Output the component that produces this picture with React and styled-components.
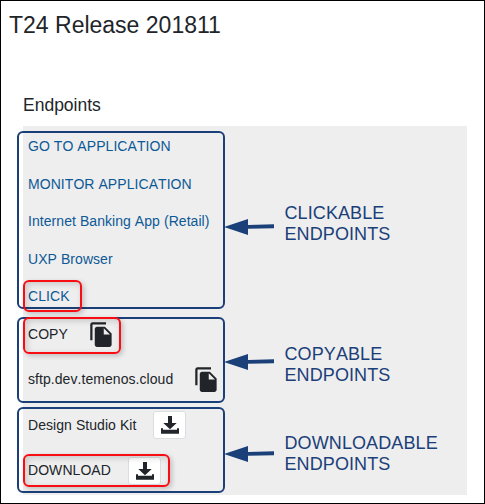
import React from "react";
import styled, { createGlobalStyle } from "styled-components";

const navy = "#1b4079";

const GlobalStyle = createGlobalStyle`
  *, *::after { box-sizing: border-box; }
  body {
    margin: 0;
    background: #fff;
    font-family: "Liberation Sans", Arial, sans-serif;
    font-kerning: none;
    color: #212529;
  }
`;

const Page = styled.main`
  width: 485px;
  height: 504px;
  border: 1px solid #000;
  overflow: hidden;
`;

const Title = styled.h1`
  margin: 10px 0 0 8px;
  font-size: 23px;
  line-height: 28px;
  font-weight: 400;
  font-kerning: normal;
`;

const Subtitle = styled.h2`
  margin: 56px 0 0 22px;
  font-size: 17.5px;
  line-height: 20px;
  font-weight: 400;
`;

const Panel = styled.section`
  display: flex;
  flex-direction: column;
  width: 444px;
  height: 369px;
  margin: 11px 0 0 22px;
  padding-top: 5px;
  background: #eee;
`;

const Section = styled.div`
  display: flex;
  height: ${(p) => p.$height}px;
  margin: 0 0 ${(p) => p.$gap || 0}px -6px;
`;

const Group = styled.div`
  width: 208px;
  padding-left: 9px;
  border: 2px solid ${navy};
  border-radius: 6px;
`;

const Row = styled.div`
  display: flex;
  align-items: center;
  height: ${(p) => p.$height}px;
  font-size: 14px;
  letter-spacing: 0.06px;
  line-height: 18px;
  white-space: nowrap;
`;

const Marked = styled.div`
  position: relative;
  display: flex;
  align-items: center;
  height: 100%;

  &::after {
    content: "";
    position: absolute;
    top: ${(p) => p.$top}px;
    left: -5px;
    width: ${(p) => p.$width}px;
    height: ${(p) => p.$height}px;
    border: 2px solid #f90d12;
    border-radius: 6px;
    box-shadow: 2px 2px 5px rgba(0, 0, 0, 0.2), inset 2px 2px 6px rgba(0, 0, 0, 0.16);
    pointer-events: none;
  }
`;

const Link = styled.a`
  color: #0d5996;
  text-decoration: none;
`;

const Callout = styled.div`
  display: flex;
  align-items: flex-start;
  padding-top: ${(p) => p.$top}px;
  color: ${navy};
`;

const CalloutText = styled.p`
  margin: 0 0 0 9.5px;
  font-size: 18px;
  line-height: 20.5px;
  letter-spacing: 0.1px;
`;

const ArrowSvg = styled.svg`
  display: block;
  flex: none;
  margin: ${(p) => p.$top}px 0 0 -1px;
`;

const IconSvg = styled.svg`
  display: block;
  flex: none;
`;

const IconButton = styled.button`
  display: flex;
  align-items: center;
  justify-content: center;
  width: 33px;
  height: 28px;
  margin: ${(p) => p.$drop || 0}px 0 0;
  padding: 0;
  border: 1px solid #dcdde0;
  border-radius: 3px;
  background: #fff;
  color: #212529;
`;

const Name = styled.span`
  width: ${(p) => p.$width}px;
`;

function CopyIcon() {
  return (
    <IconSvg width="27" height="27" viewBox="0 0 24 24" fill="#212529">
      <path d="M16 1H4c-1.1 0-2 .9-2 2v14h2V3h12V1zm-1 4 6 6v10c0 1.1-.9 2-2 2H7.99C6.89 23 6 22.1 6 21l.01-14c0-1.1.89-2 1.99-2h7zm-1 7h5.5L14 6.5V12z" />
    </IconSvg>
  );
}

function DownloadIcon() {
  return (
    <IconSvg width="18" height="18" viewBox="0 0 18 18" fill="currentColor">
      <path d="M7 0h4v7h4.7L9 13.3 2.3 7H7zM0 12.3h2v1.5h14v-1.5h2v5.4H0z" />
    </IconSvg>
  );
}

function Arrow({ top }) {
  return (
    <ArrowSvg $top={top} width="51" height="18" viewBox="0 0 51 18" fill={navy}>
      <path d="M0 9 24 1v6L50 6.3v4L24 10.8V17z" />
    </ArrowSvg>
  );
}

function Label({ top, arrowTop, children }) {
  return (
    <Callout $top={top}>
      <Arrow top={arrowTop} />
      <CalloutText>
        {children}
        <br />
        ENDPOINTS
      </CalloutText>
    </Callout>
  );
}

export default function App() {
  return (
    <>
      <GlobalStyle />
      <Page>
        <Title>T24 Release 201811</Title>
        <Subtitle>Endpoints</Subtitle>
        <Panel>
          <Section $height={178} $gap={8}>
            <Group>
              <Row $height={26}><Link>GO TO APPLICATION</Link></Row>
              <Row $height={50}><Link>MONITOR APPLICATION</Link></Row>
              <Row $height={24}><Link>Internet Banking App (Retail)</Link></Row>
              <Row $height={52}><Link>UXP Browser</Link></Row>
              <Row $height={22}>
                <Marked $top={-5} $width={59} $height={32}><Link>CLICK</Link></Marked>
              </Row>
            </Group>
            <Label top={72} arrowTop={15}>CLICKABLE</Label>
          </Section>
          <Section $height={86} $gap={4}>
            <Group>
              <Row $height={30}>
                <Marked $top={-2} $width={98} $height={37}>
                  <Name $width={60}>COPY</Name>
                  <CopyIcon />
                </Marked>
              </Row>
              <Row $height={60}>
                <Name $width={165}>sftp.dev.temenos.cloud</Name>
                <CopyIcon />
              </Row>
            </Group>
            <Label top={27} arrowTop={9}>COPYABLE</Label>
          </Section>
          <Section $height={86}>
            <Group>
              <Row $height={31}>
                <Name $width={125}>Design Studio Kit</Name>
                <IconButton aria-label="Download kit"><DownloadIcon /></IconButton>
              </Row>
              <Row $height={59}>
                <Marked $top={14} $width={147} $height={33}>
                  <Name $width={100}>DOWNLOAD</Name>
                  <IconButton $drop={2} aria-label="Download"><DownloadIcon /></IconButton>
                </Marked>
              </Row>
            </Group>
            <Label top={26} arrowTop={12}>DOWNLOADABLE</Label>
          </Section>
        </Panel>
      </Page>
    </>
  );
}
